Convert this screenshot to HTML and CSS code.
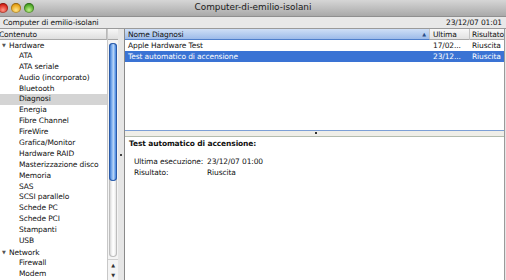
FILE: index.html
```html
<!DOCTYPE html>
<html lang="it">
<head>
    <meta charset="UTF-8">
    <title>Computer-di-emilio-isolani</title>
    <link rel="stylesheet" href="styles.css">
</head>
<body>
    <div class="window">
        <!-- Title bar -->
        <div class="titlebar">
            <div class="lights">
                <span class="light red"></span>
                <span class="light yellow"></span>
                <span class="light green"></span>
            </div>
            <div class="title">Computer-di-emilio-isolani</div>
        </div>

        <div class="infobar">
            <span>Computer di emilio-isolani</span>
            <span>23/12/07 01:01</span>
        </div>

        <div class="main">
            <!-- Contents tree -->
            <div class="sidebar">
                <div class="tree">
                    <div class="col-head"><span class="cut">Contenuto</span></div>
                    <div class="row group"><span class="tri">&#9660;</span>Hardware</div>
                    <div class="row child">ATA</div>
                    <div class="row child">ATA seriale</div>
                    <div class="row child">Audio (incorporato)</div>
                    <div class="row child">Bluetooth</div>
                    <div class="row child current">Diagnosi</div>
                    <div class="row child">Energia</div>
                    <div class="row child">Fibre Channel</div>
                    <div class="row child">FireWire</div>
                    <div class="row child">Grafica/Monitor</div>
                    <div class="row child">Hardware RAID</div>
                    <div class="row child">Masterizzazione disco</div>
                    <div class="row child">Memoria</div>
                    <div class="row child">SAS</div>
                    <div class="row child">SCSI parallelo</div>
                    <div class="row child">Schede PC</div>
                    <div class="row child">Schede PCI</div>
                    <div class="row child">Stampanti</div>
                    <div class="row child">USB</div>
                    <div class="row group"><span class="tri">&#9660;</span>Network</div>
                    <div class="row child">Firewall</div>
                    <div class="row child">Modem</div>
                </div>
                <div class="vscroll">
                    <div class="scroll-head"></div>
                    <div class="track">
                        <div class="thumb"></div>
                    </div>
                    <div class="arrows">
                        <span>&#9650;</span>
                        <span>&#9660;</span>
                    </div>
                </div>
            </div>

            <div class="vsplit"><span class="dimple"></span></div>

            <!-- Diagnostics -->
            <div class="content">
                <div class="table">
                    <div class="thead">
                        <div class="th sorted">Nome Diagnosi<span class="sort">&#9650;</span></div>
                        <div class="th">Ultima</div>
                        <div class="th last">Risultato</div>
                    </div>
                    <div class="tr">
                        <div class="td">Apple Hardware Test</div>
                        <div class="td">17/02...</div>
                        <div class="td">Riuscita</div>
                    </div>
                    <div class="tr selected">
                        <div class="td">Test automatico di accensione</div>
                        <div class="td">23/12...</div>
                        <div class="td">Riuscita</div>
                    </div>
                </div>

                <div class="hsplit"><span class="dimple"></span></div>

                <div class="detail">
                    <h2>Test automatico di accensione:</h2>
                    <div class="props">
                        <span>Ultima esecuzione:</span><span>23/12/07 01:00</span>
                        <span>Risultato:</span><span>Riuscita</span>
                    </div>
                </div>
            </div>
        </div>
    </div>
</body>
</html>
```

FILE: styles.css
```css
/* Whole window, cropped */
html, body {
    margin: 0;
    height: 100%;
    overflow: hidden;
    font-family: "DejaVu Sans", Verdana, sans-serif;
    font-size: 7.5px;
    letter-spacing: -0.12px;
    color: #111;
    background: #e6e6e6;
}

.window {
    width: 506px;
    height: 280px;
    display: flex;
    flex-direction: column;
}

/* Title bar */
.titlebar {
    position: relative;
    height: 16px;
    background: linear-gradient(#d6d6d6, #a9a9a9);
    flex-shrink: 0;
}

.lights {
    display: flex;
    gap: 3px;
    margin-left: -2px;
    padding-top: 3px;
}

.light {
    width: 10px;
    height: 10px;
    border-radius: 50%;
    box-shadow: inset 0 0 0 1px rgba(0,0,0,0.25);
}

.red { background: radial-gradient(circle at 50% 70%, #ff9a8a, #d9261b 60%, #8e120c); }
.yellow { background: radial-gradient(circle at 50% 70%, #ffe58a, #e8a318 60%, #a0630a); }
.green { background: radial-gradient(circle at 50% 70%, #c2f28a, #4ea828 60%, #236a10); }

.title {
    position: absolute;
    top: 2px;
    left: 0;
    right: 0;
    text-align: center;
    font-size: 8.9px;
    letter-spacing: 0;
    color: #1a1a1a;
}

.infobar {
    height: 13px;
    display: flex;
    align-items: center;
    justify-content: space-between;
    padding: 0 4px 0 3px;
    background: #e8e8e8;
    border-top: 1px solid #8f8f8f;
    border-bottom: 1px solid #9a9a9a;
    flex-shrink: 0;
    box-sizing: border-box;
}

.main {
    flex: 1;
    display: flex;
    min-height: 0;
}

/* Sidebar */
.sidebar {
    width: 118px;
    display: flex;
    background: #fff;
    flex-shrink: 0;
}

.tree {
    width: 107px;
}

.col-head {
    height: 11px;
    line-height: 11px;
    background: linear-gradient(#f7f7f7, #dedede);
    border-bottom: 1px solid #a8a8a8;
    border-right: 1px solid #b8b8b8;
    overflow: hidden;
    white-space: nowrap;
    box-sizing: border-box;
}

.cut {
    margin-left: -1px;
}

.row {
    height: 10.9px;
    line-height: 10.9px;
    white-space: nowrap;
}

.group {
    padding-left: 2px;
}

.tri {
    display: inline-block;
    width: 7px;
    font-size: 5px;
    color: #555;
    vertical-align: 1px;
}

.child {
    padding-left: 19px;
}

.current {
    background: #d4d4d4;
}

/* Aqua scroll bar */
.vscroll {
    width: 11px;
    display: flex;
    flex-direction: column;
    background: #f4f4f4;
    border-left: 1px solid #c8c8c8;
    box-sizing: border-box;
}

.scroll-head {
    height: 11px;
    background: linear-gradient(#f7f7f7, #dedede);
    border-bottom: 1px solid #a8a8a8;
    box-sizing: border-box;
    flex-shrink: 0;
}

.track {
    flex: 1;
    margin: 3px 1px 2px 1px;
    border-radius: 5px;
    background: linear-gradient(90deg, #c9c9c9, #f8f8f8 40%, #fff 60%, #d8d8d8);
    box-shadow: inset 0 0 0 1px #bdbdbd;
}

.thumb {
    height: 138px;
    border-radius: 5px;
    background: linear-gradient(90deg, #1f5fc0, #7fb0ef 35%, #b9d6f8 55%, #5c97e6 80%, #2563c4);
    box-shadow: inset 0 0 0 1px #2a5aa8;
}

.arrows {
    height: 20px;
    display: flex;
    flex-direction: column;
    align-items: center;
    justify-content: space-around;
    font-size: 5px;
    color: #333;
    border-top: 1px solid #cfcfcf;
    flex-shrink: 0;
}

.vsplit {
    width: 6px;
    position: relative;
    background: #e6e6e6;
    flex-shrink: 0;
}

.vsplit .dimple {
    position: absolute;
    left: 2px;
    top: 125px;
    width: 2px;
    height: 2px;
    background: #444;
}

/* Right pane */
.content {
    width: 381px;
    display: flex;
    flex-direction: column;
    border-left: 1px solid #8a8a8a;
    border-right: 1px solid #9a9a9a;
    box-sizing: border-box;
    background: #fff;
}

.table {
    height: 101px;
    background: #fff;
}

.thead, .tr {
    display: grid;
    grid-template-columns: 305px 40px 1fr;
}

.thead {
    height: 11px;
    line-height: 11px;
    background: linear-gradient(#f8f8f8, #e2e2e2);
    border-bottom: 1px solid #a8a8a8;
    box-sizing: border-box;
}

.th {
    padding-left: 3px;
    border-right: 1px solid #c4c4c4;
    white-space: nowrap;
    overflow: hidden;
}

.th.last {
    padding-left: 2px;
    border-right: none;
    overflow: visible;
}

.th.sorted {
    position: relative;
    background: linear-gradient(#cfdff6, #9dbbe9);
    border-bottom: 1px solid #4f7fcb;
}

.sort {
    position: absolute;
    right: 3px;
    top: 0;
    font-size: 5px;
    color: #2b4f8a;
}

.tr {
    height: 11px;
    line-height: 11px;
}

.td {
    padding-left: 3px;
    white-space: nowrap;
    overflow: hidden;
}

.td:last-child {
    padding-left: 2px;
}

.tr.selected {
    background: #3a73d4;
    color: #fff;
}

.hsplit {
    height: 5px;
    position: relative;
    background: #efeee8;
    border-top: 1px solid #7c9fd6;
    border-bottom: 1px solid #b4bcae;
}

.hsplit .dimple {
    position: absolute;
    left: 190px;
    top: 1px;
    width: 2px;
    height: 2px;
    background: #333;
}

.detail {
    flex: 1;
    padding: 1px 4px;
}

.detail h2 {
    margin: 0 0 8px 0;
    font-size: 7.5px;
    font-weight: bold;
    line-height: 11px;
}

.props {
    display: grid;
    grid-template-columns: 73px auto;
    padding-left: 5px;
    line-height: 10.5px;
}
```
